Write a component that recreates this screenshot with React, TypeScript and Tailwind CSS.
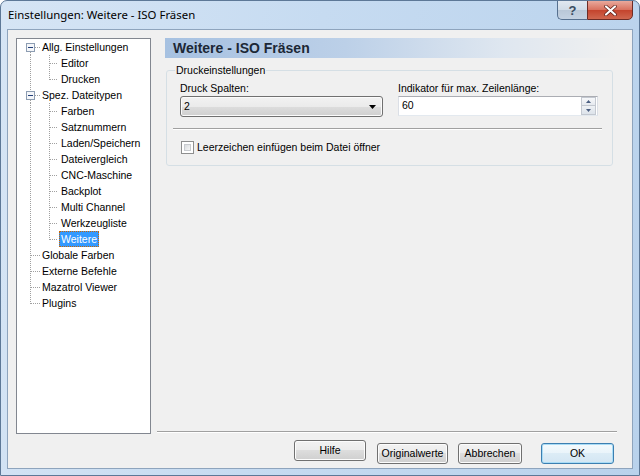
import React from "react";

type TreeNode = {
  t: string;
  l: 0 | 1;
  exp?: boolean;
  first?: boolean;
  last?: boolean;
  sel?: boolean;
};

const treeItems: TreeNode[] = [
  { t: "Allg. Einstellungen", l: 0, exp: true, first: true },
  { t: "Editor", l: 1 },
  { t: "Drucken", l: 1, last: true },
  { t: "Spez. Dateitypen", l: 0, exp: true },
  { t: "Farben", l: 1 },
  { t: "Satznummern", l: 1 },
  { t: "Laden/Speichern", l: 1 },
  { t: "Dateivergleich", l: 1 },
  { t: "CNC-Maschine", l: 1 },
  { t: "Backplot", l: 1 },
  { t: "Multi Channel", l: 1 },
  { t: "Werkzeugliste", l: 1 },
  { t: "Weitere", l: 1, last: true, sel: true },
  { t: "Globale Farben", l: 0 },
  { t: "Externe Befehle", l: 0 },
  { t: "Mazatrol Viewer", l: 0 },
  { t: "Plugins", l: 0, last: true },
];

const dot = { stroke: "#a0a0a0", strokeDasharray: "1 1", strokeWidth: 1 };

function Lines({ n }: { n: TreeNode }) {
  if (n.l === 0) {
    return (
      <svg width="23" height="16" shapeRendering="crispEdges" className="shrink-0">
        {n.exp ? (
          <>
            {!n.first && <line x1="13.5" y1="0" x2="13.5" y2="4" {...dot} />}
            <line x1="13.5" y1="13" x2="13.5" y2="16" {...dot} />
            <line x1="18" y1="8.5" x2="23" y2="8.5" {...dot} />
            <rect x="9.5" y="4.5" width="8" height="8" fill="#f4f6f9" stroke="#8d9db2" />
            <line x1="11" y1="8.5" x2="16" y2="8.5" stroke="#23407a" strokeWidth="1" />
          </>
        ) : (
          <>
            <line x1="13.5" y1="0" x2="13.5" y2={n.last ? 9 : 16} {...dot} />
            <line x1="14" y1="8.5" x2="23" y2="8.5" {...dot} />
          </>
        )}
      </svg>
    );
  }
  return (
    <svg width="42" height="16" shapeRendering="crispEdges" className="shrink-0">
      <line x1="13.5" y1="0" x2="13.5" y2="16" {...dot} />
      <line x1="32.5" y1="0" x2="32.5" y2={n.last ? 9 : 16} {...dot} />
      <line x1="33" y1="8.5" x2="41" y2="8.5" {...dot} />
    </svg>
  );
}

function WinButton({ label, w, def }: { label: string; w: string; def?: boolean }) {
  return (
    <button
      className={
        def
          ? `${w} h-[21px] rounded-[3px] border border-[#3c7fb1] bg-[linear-gradient(180deg,#f4fafd_0%,#e9f4fa_50%,#dcecf6_50%,#d3e6f3_100%)] shadow-[inset_0_0_0_1px_#a9dcf6] text-[10.5px] text-black`
          : `${w} h-[21px] rounded-[3px] border border-[#707070] bg-[linear-gradient(180deg,#f2f2f2_0%,#ebebeb_50%,#dddddd_50%,#cfcfcf_100%)] shadow-[inset_0_0_0_1px_#fcfcfc] text-[10.5px] text-black`
      }
    >
      {label}
    </button>
  );
}

export default function App() {
  return (
    <div className="w-[640px] h-[476px] flex flex-col px-[6px] pb-[6px] rounded-t-[7px] border border-[#5d7897] bg-[linear-gradient(100deg,#d6e5f5_0%,#c6dbf1_45%,#b9d2ec_100%)] font-['Liberation_Sans',Arial,sans-serif] overflow-hidden">
      {/* title bar */}
      <div className="h-[28px] flex justify-between items-start shrink-0">
        <div className="ml-[1px] mt-[6px] text-[11.4px] leading-[16px] text-black font-['Noto_Sans',sans-serif]">
          Einstellungen: Weitere - ISO Fräsen
        </div>
        <div className="flex -mt-[1px]">
          <div className="w-[30px] h-[20px] rounded-bl-[5px] border border-r-0 border-[#56708f] bg-[linear-gradient(180deg,#e1e8f0_0%,#d0dbe7_50%,#b9c7d7_50%,#c4d2e2_100%)] flex items-center justify-center text-[13px] font-bold text-[#3a4c61] leading-none">
            ?
          </div>
          <div className="w-[46px] h-[20px] rounded-br-[5px] border border-[#6d2c25] bg-[linear-gradient(180deg,#e9a99c_0%,#d8705d_50%,#c4432c_50%,#d0674f_100%)] flex items-center justify-center">
            <svg width="13" height="11" viewBox="0 0 13 11">
              <path d="M2 1.5 L11 9.5 M11 1.5 L2 9.5" stroke="#5a1d16" strokeWidth="3.6" strokeLinecap="round" />
              <path d="M2 1.5 L11 9.5 M11 1.5 L2 9.5" stroke="#ffffff" strokeWidth="2.2" strokeLinecap="round" />
            </svg>
          </div>
        </div>
      </div>

      {/* client area */}
      <div className="flex-1 flex flex-col border border-[#8ea4bd] bg-[#f0f0f0] pt-[8px] pl-[8px]">
        <div className="h-[396px] flex">
          {/* tree */}
          <div className="w-[135px] h-full border border-[#828790] bg-white text-[10.5px] text-black">
            {treeItems.map((n) => (
              <div key={n.t} className="h-[16px] flex items-center">
                <Lines n={n} />
                {n.sel ? (
                  <span className="h-[16px] leading-[14px] px-[1px] border border-dotted border-[#cc6600] bg-[#3399ff] text-white whitespace-nowrap">
                    {n.t}
                  </span>
                ) : (
                  <span className="h-[16px] leading-[14px] px-[1px] border border-transparent whitespace-nowrap">
                    {n.t}
                  </span>
                )}
              </div>
            ))}
          </div>

          {/* right panel */}
          <div className="ml-[6px] w-[460px] flex flex-col">
            <div className="ml-[8px] h-[20px] pl-[8px] flex items-center bg-[linear-gradient(90deg,#a6c1e1_0%,#bcd0e8_40%,#dfe7f0_75%,#f0f0f0_100%)] text-[14px] font-bold text-[#1c2836]">
              Weitere - ISO Fräsen
            </div>

            <fieldset className="ml-[9px] w-[447px] mt-[6px] border border-[#d5dfe5] rounded-[3px] px-[13px] pb-[11px] text-[10.5px] text-black">
              <legend className="-ml-[5px] px-[1px] leading-[13px]">Druckeinstellungen</legend>
              <div className="flex mt-[5px]">
                <div className="w-[203px] flex flex-col">
                  <div className="leading-[13px]">Druck Spalten:</div>
                  <div className="mt-[1px] h-[21px] rounded-[3px] border border-[#707070] bg-[linear-gradient(180deg,#f2f2f2_0%,#ebebeb_50%,#dddddd_50%,#cfcfcf_100%)] shadow-[inset_0_0_0_1px_#fbfbfb] flex items-center justify-between pl-[3px] pr-[6px]">
                    <span>2</span>
                    <svg width="7" height="4" viewBox="0 0 7 4">
                      <path d="M0 0 H7 L3.5 4 Z" fill="#000" />
                    </svg>
                  </div>
                </div>
                <div className="ml-[15px] w-[200px] flex flex-col">
                  <div className="leading-[13px]">Indikator für max. Zeilenlänge:</div>
                  <div className="mt-[1px] h-[20px] border border-[#abadb3] border-l-[#dbdfe6] border-r-[#dbdfe6] border-b-[#e3e9ef] bg-white flex items-center justify-between pl-[3px] pr-[1px]">
                    <span>60</span>
                    <div className="w-[15px] h-[18px] flex flex-col">
                      <div className="h-[9px] border border-[#c3c8d0] bg-[linear-gradient(180deg,#f7f8fa,#e5e9ef)] flex items-center justify-center">
                        <svg width="5" height="3" viewBox="0 0 5 3">
                          <path d="M0 3 H5 L2.5 0 Z" fill="#4b5f82" />
                        </svg>
                      </div>
                      <div className="h-[9px] border border-t-0 border-[#c3c8d0] bg-[linear-gradient(180deg,#eef1f5,#dde3ea)] flex items-center justify-center">
                        <svg width="5" height="3" viewBox="0 0 5 3">
                          <path d="M0 0 H5 L2.5 3 Z" fill="#4b5f82" />
                        </svg>
                      </div>
                    </div>
                  </div>
                </div>
              </div>
              <div className="mt-[11px] -ml-[7px] -mr-[3px] h-[2px] border-t border-[#a0a0a0] border-b border-b-white" />
              <div className="mt-[11px] ml-[1px] h-[13px] flex items-center">
                <div className="w-[13px] h-[13px] border border-[#8e8f8f] bg-white p-[2px]">
                  <div className="w-full h-full bg-[linear-gradient(135deg,#d9dcdf,#f6f6f6)] border border-[#c8cbcf]" />
                </div>
                <span className="ml-[3px] leading-[13px]">Leerzeichen einfügen beim Datei öffner</span>
              </div>
            </fieldset>

            <div className="mt-auto mb-[1px] h-[2px] border-t border-[#a0a0a0] border-b border-b-white" />
          </div>
        </div>

        {/* buttons */}
        <div className="mt-[6px] flex justify-end pr-[18px]">
          <WinButton label="Hilfe" w="w-[72px]" />
          <div className="ml-[11px]">
            <WinButton label="Originalwerte" w="w-[71px]" />
          </div>
          <div className="ml-[10px]">
            <WinButton label="Abbrechen" w="w-[64px]" />
          </div>
          <div className="ml-[19px]">
            <WinButton label="OK" w="w-[73px]" def />
          </div>
        </div>
      </div>
    </div>
  );
}
